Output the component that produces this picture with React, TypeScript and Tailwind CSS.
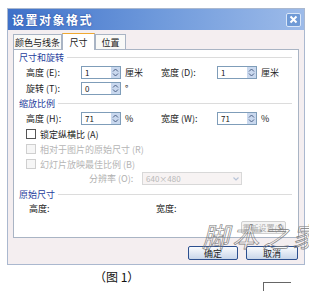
import React from "react";

const F = { fontFamily: '"Noto Sans CJK SC", "Noto Sans", sans-serif' };

function Spin({ value, unit }: { value: string; unit: string }) {
  return (
    <div className="flex items-center">
      <div className="flex h-[13px] w-[40px] items-center border border-[#7f9db9] bg-white">
        <span className="flex-1 pl-[3px] text-[8px] leading-none text-[#222]">{value}</span>
        <div className="flex h-[11px] w-[9px] flex-col items-center justify-center bg-[#c9d8ee]">
          <svg width="7" height="9" viewBox="0 0 7 9">
            <path d="M1 3.5 L3.5 1 L6 3.5" fill="none" stroke="#4d6185" strokeWidth="1" />
            <path d="M1 5.5 L3.5 8 L6 5.5" fill="none" stroke="#4d6185" strokeWidth="1" />
          </svg>
        </div>
      </div>
      <span className="ml-[4px] text-[9px] leading-none text-[#222]">{unit}</span>
    </div>
  );
}

function GroupTitle({ text }: { text: string }) {
  return (
    <div className="flex items-center gap-[3px] pl-[5px] pr-[6px]">
      <span className="text-[9px] leading-none text-[#1e3d9c]">{text}</span>
      <div className="h-px flex-1 bg-[#dcdcdc]" />
    </div>
  );
}

function Check({ label, disabled }: { label: string; disabled?: boolean }) {
  return (
    <div className="flex items-center gap-[4px] pl-[12px]">
      <div className={`h-[10px] w-[10px] border ${disabled ? "border-[#cfcfcf] bg-[#f6f6f6]" : "border-[#555] bg-white"}`} />
      <span className={`text-[9px] leading-none ${disabled ? "text-[#b5b5b5]" : "text-[#222]"}`}>{label}</span>
    </div>
  );
}

export default function App() {
  return (
    <div className="relative h-[291px] w-[309px] overflow-hidden bg-white" style={F}>
      <div className="pl-[7px] pt-[8px]">
        <div className="flex h-[257px] w-[298px] flex-col border border-[#aab8cf] bg-[#f4eef0]">
          {/* title bar */}
          <div className="flex h-[21px] items-center justify-between bg-gradient-to-r from-[#3f71c9] via-[#6e99db] to-[#9dbbe9] pl-[4px] pr-[3px]">
            <span className="text-[12px] font-bold leading-none tracking-[1.5px] text-white [text-shadow:0_0_2px_#23469a]">设置对象格式</span>
            <div className="flex h-[14px] w-[15px] items-center justify-center rounded-[2px] border border-[#d9e6f8] bg-[#6f9ad6]">
              <svg width="9" height="9" viewBox="0 0 9 9">
                <path d="M1.5 1.5 L7.5 7.5 M7.5 1.5 L1.5 7.5" stroke="white" strokeWidth="2" />
              </svg>
            </div>
          </div>
          {/* tabs */}
          <div className="mt-[3px] flex items-end pl-[5px]">
            <div className="flex h-[15px] w-[49px] items-center justify-center border border-b-0 border-[#a9b4c4] bg-[#f9f9f7] text-[9px] leading-none text-[#222]">颜色与线条</div>
            <div className="relative z-10 -mb-px flex h-[17px] w-[33px] items-center justify-center border border-b-0 border-[#a9b4c4] border-t-[#f0a830] bg-white text-[9px] leading-none text-[#222]">尺寸</div>
            <div className="flex h-[15px] w-[31px] items-center justify-center border border-b-0 border-[#a9b4c4] bg-[#f9f9f7] text-[9px] leading-none text-[#222]">位置</div>
          </div>
          {/* panel */}
          <div className="mx-[5px] flex h-[189px] flex-col border border-[#a9b4c4] bg-white pt-[3px]">
            <GroupTitle text="尺寸和旋转" />
            <div className="mt-[4px] flex items-center">
              <span className="w-[67px] pl-[12px] text-[9px] leading-none text-[#222]">高度 (E):</span>
              <div className="w-[80px]"><Spin value="1" unit="厘米" /></div>
              <span className="w-[56px] text-[9px] leading-none text-[#222]">宽度 (D):</span>
              <Spin value="1" unit="厘米" />
            </div>
            <div className="mt-[3px] flex items-center">
              <span className="w-[67px] pl-[12px] text-[9px] leading-none text-[#222]">旋转 (T):</span>
              <Spin value="0" unit="°" />
            </div>
            <div className="mt-[4px]"><GroupTitle text="缩放比例" /></div>
            <div className="mt-[4px] flex items-center">
              <span className="w-[67px] pl-[12px] text-[9px] leading-none text-[#222]">高度 (H):</span>
              <div className="w-[80px]"><Spin value="71" unit="%" /></div>
              <span className="w-[56px] text-[9px] leading-none text-[#222]">宽度 (W):</span>
              <Spin value="71" unit="%" />
            </div>
            <div className="mt-[4px]"><Check label="锁定纵横比 (A)" /></div>
            <div className="mt-[5px]"><Check label="相对于图片的原始尺寸 (R)" disabled /></div>
            <div className="mt-[5px]"><Check label="幻灯片放映最佳比例 (B)" disabled /></div>
            <div className="mt-[3px] flex items-center">
              <span className="w-[128px] pl-[75px] text-[9px] leading-none text-[#b0b0b0]">分辨率 (O):</span>
              <div className="flex h-[13px] w-[100px] items-center border border-[#d8d8d8] bg-[#f7f3f3]">
                <span className="flex-1 pl-[3px] text-[8px] leading-none text-[#b8b8b8]">640×480</span>
                <svg width="10" height="10" viewBox="0 0 10 10">
                  <path d="M2.5 3.5 L5 6 L7.5 3.5" fill="none" stroke="#b8c4d8" strokeWidth="1.2" />
                </svg>
              </div>
            </div>
            <div className="mt-[5px]"><GroupTitle text="原始尺寸" /></div>
            <div className="mt-[5px] flex items-center">
              <span className="w-[142px] pl-[15px] text-[9px] leading-none text-[#222]">高度:</span>
              <span className="text-[9px] leading-none text-[#222]">宽度:</span>
            </div>
            <div className="mt-[8px] flex justify-end pr-[12px]">
              <div className="flex h-[13px] w-[45px] items-center justify-center rounded-[2px] border border-[#d0d0d0] bg-[#f4f4f4] text-[8px] leading-none text-[#b0b0b0]">重新设置(S)</div>
            </div>
          </div>
          {/* buttons */}
          <div className="mt-[8px] flex justify-end gap-[8px] pr-[6px]">
            <div className="flex h-[14px] w-[50px] items-center justify-center rounded-[2px] border border-[#2c4f8f] bg-gradient-to-b from-[#fafbfd] to-[#c9d6ea] text-[9px] leading-none text-[#222]">确定</div>
            <div className="flex h-[14px] w-[52px] items-center justify-center rounded-[2px] border border-[#2c4f8f] bg-gradient-to-b from-[#fafbfd] to-[#c9d6ea] text-[9px] leading-none text-[#222]">取消</div>
          </div>
        </div>
      </div>
      {/* caption */}
      <div className="mt-[6px] pl-[94px] text-[12px] leading-none text-[#111]" style={{ fontFamily: '"Noto Sans CJK SC", serif' }}>（图 1）</div>
      {/* watermark */}
      <div className="pointer-events-none absolute left-[202px] top-[222px] whitespace-nowrap text-[27px] italic leading-none tracking-[3px] text-transparent [-webkit-text-stroke:0.6px_#7a7a7a]" style={{ fontFamily: '"Noto Sans CJK SC", sans-serif' }}>脚本之家</div>
      {/* corner mark */}
      <div className="absolute left-[263px] top-[282px] h-[10px] w-[28px] border-l border-t border-[#666]" />
    </div>
  );
}
